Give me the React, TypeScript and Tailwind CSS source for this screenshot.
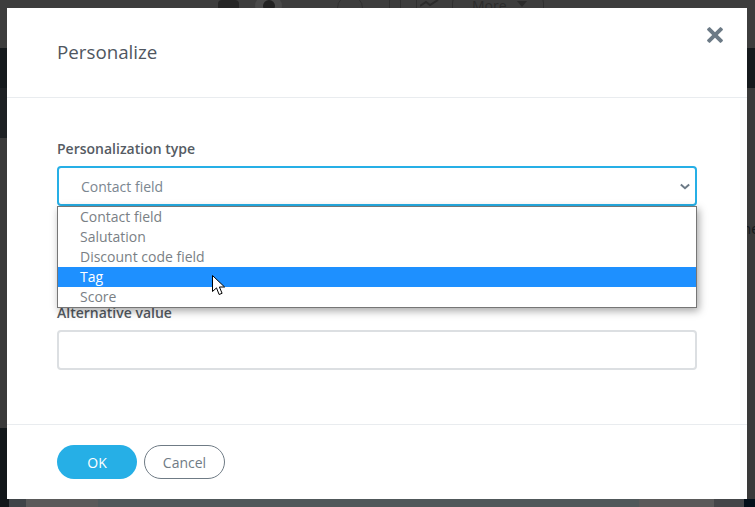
import React from 'react';

const options = ['Contact field', 'Salutation', 'Discount code field', 'Tag', 'Score'];

const font = "font-['Open_Sans',sans-serif]";

// dimmed page that shows around the modal
const Backdrop: React.FC = () => (
  <div className="flex h-[507px] w-[755px] flex-col overflow-hidden bg-[#3a3a3a]">
    <div className="h-12 overflow-hidden bg-[#3d3d3d]">
      <div className="-mt-[5px] flex items-start pl-[218px]">
        <div className="mt-[5px] h-5 w-[21px] rounded-sm bg-[#262626]" />
        <div className="mt-[1px] ml-4 flex h-5 w-[27px] items-center justify-center rounded-full bg-[#4a4a4a]">
          <div className="h-3 w-3 rounded-full bg-[#222222]" />
        </div>
        <div className="ml-[55px] h-8 w-[26px] rounded-full border border-[#303030]" />
        <div className="ml-[26px] h-8 w-3 rounded-full border border-[#303030]" />
        <div className="ml-[15px] h-[18px] w-px bg-[#303030]" />
        <svg viewBox="0 0 20 8" className="mt-1 ml-[3px] h-2 w-5 text-[#2b2b2b]" fill="none" stroke="currentColor" strokeWidth="2">
          <path d="M0 7 6 3l4 3 8-5" />
        </svg>
        <div className="ml-[12px] flex h-8 w-[92px] items-start rounded-lg border border-[#2f2f2f] pl-[19px] text-sm leading-5 text-[#2b2b2b]">
          <span>More</span>
          <svg viewBox="0 0 10 6" className="mt-[5px] ml-[10px] h-[6px] w-[10px]" fill="#2b2b2b">
            <path d="M0 0h10L5 6Z" />
          </svg>
        </div>
      </div>
    </div>
    <div className="h-10 bg-[#15191c]" />
    <div className="h-[50px] bg-[#3a3a3a]">
      <div className="h-full w-[7px] bg-[#1d2023]" />
    </div>
    <div className="flex h-[290px] justify-end pt-[81px]">
      <span className="-mr-1 text-sm leading-5 text-[#15191c]">ne</span>
    </div>
    <div className="h-[71px] bg-[#3a3a3a]">
      <div className="h-full w-[7px] bg-[#12171a]" />
    </div>
    <div className="flex h-2 flex-1">
      <div className="w-[9px] bg-[#12171a]" />
      <div className="w-[17px] bg-[#3f4448]" />
      <div className="w-[72px] bg-[#5a5a5a]" />
      <div className="flex-1 bg-[#50585a]" />
      <div className="w-[75px] bg-[#5a5a5a]" />
      <div className="w-[30px] bg-[#444649]" />
      <div className="w-[11px] bg-[#04101a]" />
    </div>
  </div>
);

export default function App() {
  return (
    <div className={`relative h-[507px] w-[755px] overflow-hidden ${font}`}>
      <Backdrop />

      <div className="absolute top-2 left-[7px] flex h-[491px] w-[740px] flex-col bg-white">
        <div className="relative flex h-[90px] items-center border-b border-[#e9ecef] pb-[2px] pl-[50px]">
          <h2 className="text-[18.75px] leading-6 font-medium text-[#4f5660]">Personalize</h2>
          <svg viewBox="0 0 16 16" className="absolute top-[19px] right-6 h-4 w-4 text-[#6c7a86]" fill="currentColor">
            <path d="M3.2.4 8 5.2 12.8.4a1 1 0 0 1 1.4 0l1.4 1.4a1 1 0 0 1 0 1.4L10.8 8l4.8 4.8a1 1 0 0 1 0 1.4l-1.4 1.4a1 1 0 0 1-1.4 0L8 10.8l-4.8 4.8a1 1 0 0 1-1.4 0L.4 14.2a1 1 0 0 1 0-1.4L5.2 8 .4 3.2a1 1 0 0 1 0-1.4L1.8.4a1 1 0 0 1 1.4 0Z" />
          </svg>
        </div>

        <div className="flex h-[326px] flex-col px-[50px] pt-[41px]">
          <label className="text-sm leading-5 font-semibold text-[#555b63]">Personalization type</label>
          <div className="relative mt-[7px]">
            <div className="flex h-10 items-center justify-between rounded border-2 border-[#26afe6] pt-[2px] pr-[4px] pl-[22px] text-sm text-[#7b8690]">
              <span>Contact field</span>
              <svg viewBox="0 0 12 8" className="mr-[1px] mb-[2px] h-[7px] w-[10px] text-[#6c7a86]" fill="none" stroke="currentColor" strokeWidth="2.4">
                <path d="M1 1.5 6 6l5-4.5" />
              </svg>
            </div>
            <ul className="absolute top-10 right-0 left-0 z-10 border border-[#767676] bg-white text-sm leading-5 text-[#7a7f85] shadow-[2px_3px_8px_rgba(0,0,0,0.35)]">
              {options.map((o) => (
                <li key={o} className={`pl-[22px] ${o === 'Tag' ? 'bg-[#1e90ff] text-white' : ''}`}>
                  {o}
                </li>
              ))}
            </ul>
          </div>
          <label className="mt-[97px] text-sm leading-5 font-semibold text-[#555b63]">Alternative value</label>
          <div className="mt-[7px] h-10 rounded border-2 border-[#dcdfe2]" />
        </div>

        <div className="flex flex-1 items-start gap-[7px] border-t border-[#e9ecef] pt-5 pl-[50px]">
          <button className="h-[34px] w-20 rounded-full bg-[#26afe6] pt-[2px] text-sm font-medium text-white">OK</button>
          <button className="h-[34px] w-[81px] rounded-full border border-[#6f7b85] pt-[2px] text-sm text-[#6f7b85]">Cancel</button>
        </div>
      </div>

      {/* mouse pointer */}
      <svg viewBox="0 0 13 21" className="absolute top-[275px] left-[212px] z-20 h-[21px] w-[13px]">
        <path d="M.5.5v16l4-3.6 2.6 6.6 3-1.2-2.7-6.3h5.2Z" fill="#fff" stroke="#000" strokeWidth="1" />
      </svg>
    </div>
  );
}
